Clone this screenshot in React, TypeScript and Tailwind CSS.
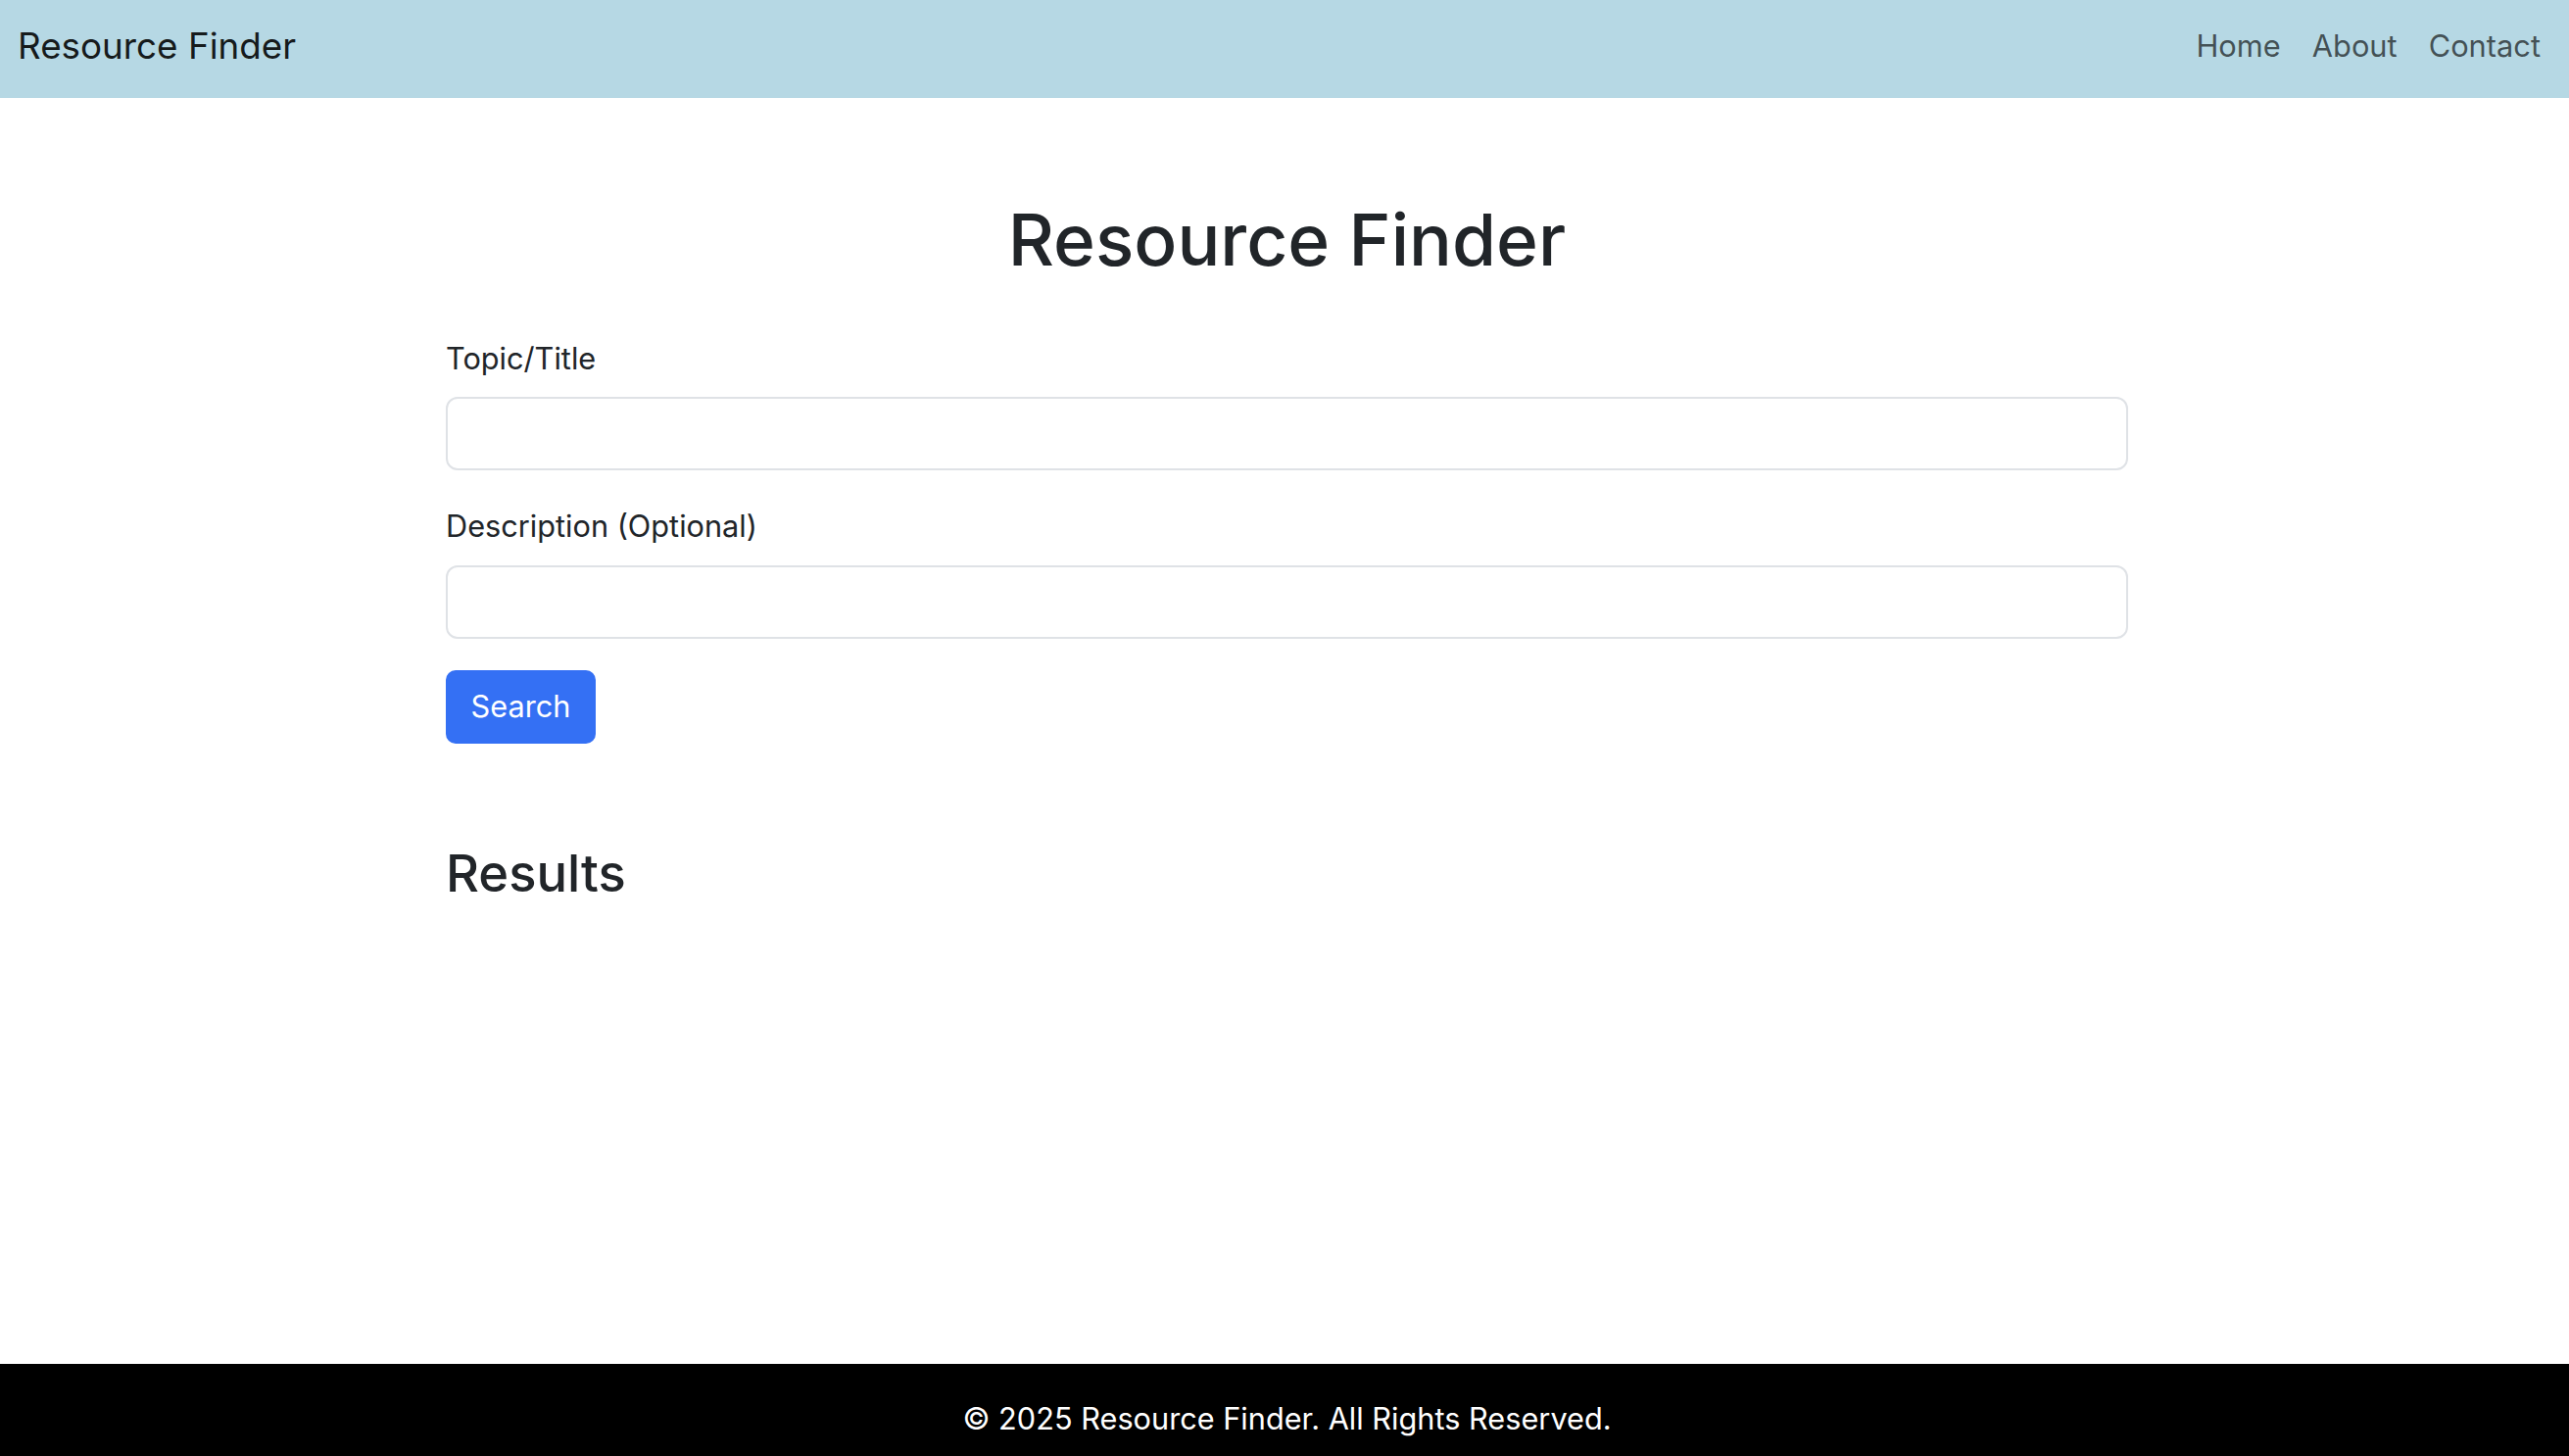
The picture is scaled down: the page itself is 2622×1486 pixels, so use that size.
import { useState } from "react";

export default function App() {
    const [topic, setTopic] = useState("");
    const [description, setDescription] = useState("");

    return (
        <div
            className="min-h-screen flex flex-col bg-white text-[#212529]"
            style={{ fontFamily: "Inter, 'Noto Sans', 'Liberation Sans', sans-serif" }}
        >
            <nav className="h-[100px] shrink-0 bg-[#b6d8e4] flex items-center justify-between pl-[18px] pr-[29px] pb-[6px]">
                <a href="#" className="text-[36.8px] leading-none text-black/90">
                    Resource Finder
                </a>
                <div className="flex items-center gap-[32px] text-[30.8px] leading-none text-black/65">
                    <a href="#">Home</a>
                    <a href="#">About</a>
                    <a href="#">Contact</a>
                </div>
            </nav>

            <main className="w-[1722px] mx-auto pl-[5px]">
                <h1 className="mt-[99px] text-center text-[73px] leading-[92px] font-medium">Resource Finder</h1>

                <form onSubmit={(e) => e.preventDefault()} className="mt-[53px]">
                    <label htmlFor="topic" className="block text-[30.7px] leading-[44px] mb-[17px]">
                        Topic/Title
                    </label>
                    <input
                        id="topic"
                        value={topic}
                        onChange={(e) => setTopic(e.target.value)}
                        className="block w-full h-[75px] rounded-[12px] border-2 border-[#dfe2e6] px-[22px] text-[30.7px] outline-none"
                    />

                    <label htmlFor="description" className="block mt-[35px] text-[30.7px] leading-[44px] mb-[18px]">
                        Description (Optional)
                    </label>
                    <input
                        id="description"
                        value={description}
                        onChange={(e) => setDescription(e.target.value)}
                        className="block w-full h-[75px] rounded-[12px] border-2 border-[#dfe2e6] px-[22px] text-[30.7px] outline-none"
                    />

                    <button
                        type="submit"
                        className="mt-[32px] h-[75px] w-[153px] rounded-[10px] bg-[#3470f4] text-white text-[30.7px] leading-none"
                    >
                        Search
                    </button>
                </form>

                <h2 className="mt-[101px] text-[52.5px] leading-[62px] font-medium">Results</h2>
            </main>

            <footer className="mt-auto bg-black text-white text-center text-[30.7px] leading-[44px] pt-[34px] pb-[16px] pl-[5px]">
                © 2025 Resource Finder. All Rights Reserved.
            </footer>
        </div>
    );
}
